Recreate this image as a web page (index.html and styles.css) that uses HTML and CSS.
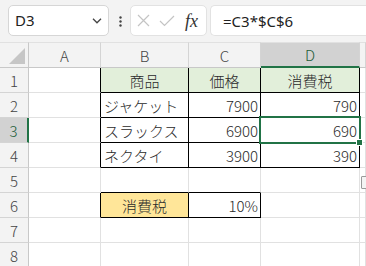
FILE: index.html
```html
<!DOCTYPE html>
<html lang="ja">
<head>
<meta charset="utf-8">
<link rel="stylesheet" href="styles.css">
</head>
<body>
<div class="app">
  <div class="fbar">
    <div class="namebox">
      <span class="nb-text">D3</span>
      <svg class="chev" width="10" height="6" viewBox="0 0 10 6"><polyline points="1,0.8 5,4.8 9,0.8" fill="none" stroke="#444" stroke-width="1.3"/></svg>
    </div>
    <svg class="dots" width="3" height="11" viewBox="0 0 3 11"><circle cx="1.5" cy="1.5" r="1.2" fill="#444"/><circle cx="1.5" cy="5.5" r="1.2" fill="#444"/><circle cx="1.5" cy="9.5" r="1.2" fill="#444"/></svg>
    <div class="fxbox">
      <svg width="13" height="13" viewBox="0 0 13 13"><path d="M1 1 L12 12 M12 1 L1 12" stroke="#c4c4c4" stroke-width="1.2" fill="none"/></svg>
      <svg width="16" height="12" viewBox="0 0 16 12"><path d="M1 6 L5.5 10.5 L15 1" stroke="#c4c4c4" stroke-width="1.2" fill="none"/></svg>
      <span class="fx">fx</span>
    </div>
    <div class="formula">=C3*$C$6</div>
  </div>
  <div class="sheet">
    <div class="c hd corner"><span class="tri"></span></div>
    <div class="c hd">A</div>
    <div class="c hd">B</div>
    <div class="c hd">C</div>
    <div class="c hd hsel">D</div>
    <div class="c hd"></div>

    <div class="c rh">1</div>
    <div class="c br"></div>
    <div class="c br bb green ctr">商品</div>
    <div class="c br bb green ctr">価格</div>
    <div class="c br bb green ctr">消費税</div>
    <div class="c"></div>

    <div class="c rh">2</div>
    <div class="c br"></div>
    <div class="c br bb lft">ジャケット</div>
    <div class="c br bb num">7900</div>
    <div class="c br bb num">790</div>
    <div class="c"></div>

    <div class="c rh rsel">3</div>
    <div class="c br"></div>
    <div class="c br bb lft">スラックス</div>
    <div class="c br bb num">6900</div>
    <div class="c br bb num active">690<span class="handle"></span></div>
    <div class="c"></div>

    <div class="c rh">4</div>
    <div class="c br"></div>
    <div class="c br bb lft">ネクタイ</div>
    <div class="c br bb num">3900</div>
    <div class="c br bb num">390</div>
    <div class="c"></div>

    <div class="c rh">5</div>
    <div class="c"></div>
    <div class="c bb"></div>
    <div class="c bb"></div>
    <div class="c"></div>
    <div class="c rel"><span class="qicon"></span></div>

    <div class="c rh">6</div>
    <div class="c br"></div>
    <div class="c br bb yellow ctr">消費税</div>
    <div class="c br bb num">10%</div>
    <div class="c"></div>
    <div class="c"></div>

    <div class="c rh">7</div>
    <div class="c"></div>
    <div class="c"></div>
    <div class="c"></div>
    <div class="c"></div>
    <div class="c"></div>

    <div class="c rh">8</div>
    <div class="c"></div>
    <div class="c"></div>
    <div class="c"></div>
    <div class="c"></div>
    <div class="c"></div>
  </div>
</div>
</body>
</html>
```

FILE: styles.css
```css
* { box-sizing: border-box; }
html, body { margin: 0; padding: 0; }
body {
  width: 366px;
  height: 266px;
  overflow: hidden;
  background: #ffffff;
  font-family: "Noto Sans CJK JP", "Noto Sans", sans-serif;
}
.app { display: flex; flex-direction: column; }

.fbar {
  height: 42px;
  background: #f3f3f3;
  display: flex;
  align-items: flex-start;
  padding: 5px 0 0 8px;
}
.namebox {
  width: 101px;
  height: 31px;
  background: #fff;
  border: 1px solid #d6d6d6;
  border-radius: 5px;
  display: flex;
  align-items: center;
  justify-content: space-between;
  padding: 0 6px 0 6px;
  font-family: "Noto Sans", "Liberation Sans", sans-serif;
  font-size: 15px;
  color: #222;
}
.nb-text { line-height: 1; }
.chev { margin-top: 1px; }
.dots { margin: 11px 8px 0 10px; }
.fxbox {
  width: 77px;
  height: 31px;
  background: #fff;
  border: 1px solid #e2e2e2;
  border-radius: 5px;
  display: flex;
  align-items: center;
  padding-left: 6px;
  gap: 9px;
}
.fx {
  font-family: "Liberation Serif", serif;
  font-style: italic;
  font-size: 18px;
  color: #333;
  margin-left: 1px;
  line-height: 1;
}
.formula {
  margin-left: 3px;
  flex: 1;
  height: 31px;
  background: #fff;
  border: 1px solid #e2e2e2;
  border-right: none;
  border-radius: 5px 0 0 5px;
  padding-left: 12px;
  display: flex;
  align-items: center;
  font-family: "Noto Sans", "Liberation Sans", sans-serif;
  font-size: 15px;
  color: #222;
}

.sheet {
  display: grid;
  grid-template-columns: 29px 72px 88px 72px 99px 1fr;
  grid-template-rows: 26px repeat(8, 25px);
  font-size: 15px;
  font-weight: 300;
  color: #2a2a2a;
}
.c {
  border-right: 1px solid #e1e1e1;
  border-bottom: 1px solid #e1e1e1;
  display: flex;
  align-items: center;
  line-height: 1;
  white-space: nowrap;
  overflow: visible;
}
.hd {
  background: #f3f3f3;
  border-top: 1px solid #e1e1e1;
  border-right-color: #d4d4d4;
  border-bottom-color: #c8c8c8;
  justify-content: center;
  color: #444;
}
.corner { position: relative; border-right-color: #c8c8c8; }
.tri {
  position: absolute;
  right: 3px;
  bottom: 3px;
  width: 0;
  height: 0;
  border-left: 16px solid transparent;
  border-bottom: 16px solid #c6c6c6;
}
.hsel {
  background: #d2d2d2;
  border-bottom: 2px solid #217346;
  color: #1d5c38;
}
.rh {
  background: #f3f3f3;
  border-right-color: #c8c8c8;
  border-bottom-color: #d4d4d4;
  justify-content: center;
  color: #444;
}
.rsel {
  background: #d2d2d2;
  border-right: 2px solid #217346;
  color: #1d5c38;
}
.br { border-right-color: #000; }
.bb { border-bottom-color: #000; }
.green { background: #e2efda; }
.yellow { background: #ffe699; }
.ctr { justify-content: center; }
.lft { justify-content: flex-start; padding-left: 3px; }
.num { justify-content: flex-end; padding-right: 2px; }
.active { position: relative; }
.active::after {
  content: "";
  position: absolute;
  top: -2px;
  left: -2px;
  right: -2px;
  bottom: -2px;
  border: 2px solid #217346;
}
.handle {
  position: absolute;
  right: -4px;
  bottom: -4px;
  width: 7px;
  height: 7px;
  background: #217346;
  border: 1px solid #fff;
  z-index: 2;
}
.rel { position: relative; }
.qicon {
  position: absolute;
  left: 1px;
  top: 8px;
  width: 10px;
  height: 13px;
  border: 1px solid #9a9a9a;
  background: #f4f4f4;
  border-radius: 1px;
}
```
